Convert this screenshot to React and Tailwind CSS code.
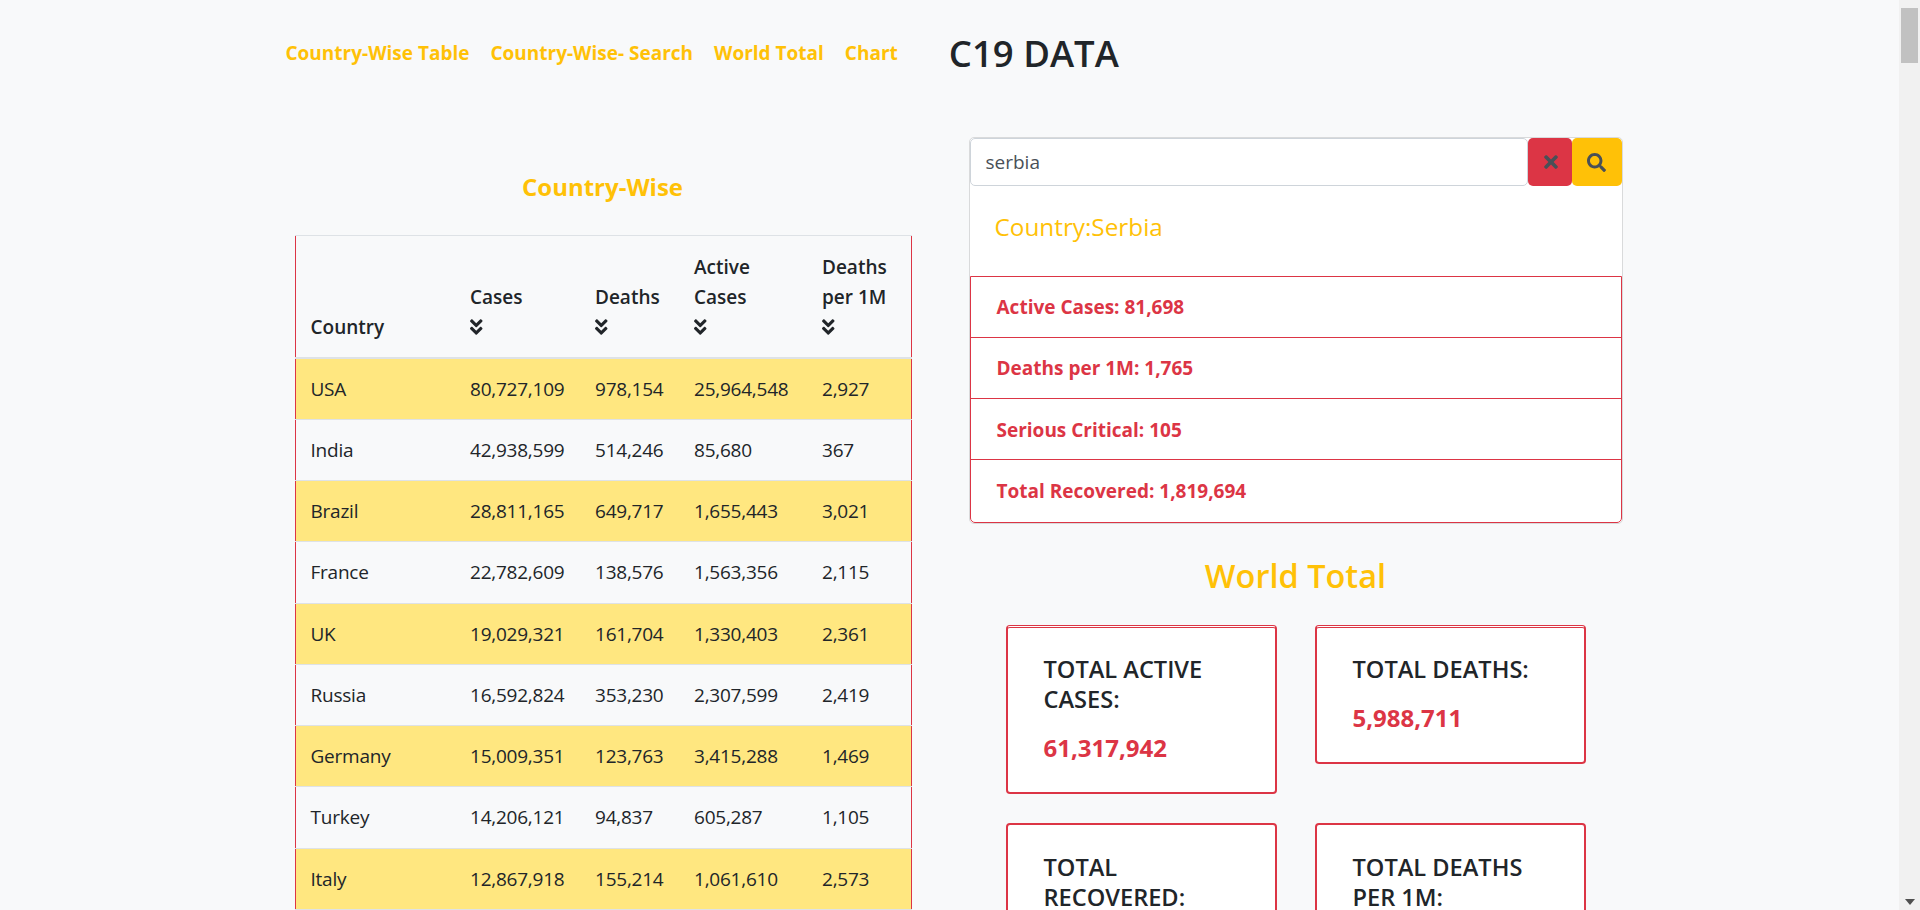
import React from "react";
import { FaAngleDoubleDown, FaTimes, FaSearch } from "react-icons/fa";

const rows = [
  ["USA", "80,727,109", "978,154", "25,964,548", "2,927"],
  ["India", "42,938,599", "514,246", "85,680", "367"],
  ["Brazil", "28,811,165", "649,717", "1,655,443", "3,021"],
  ["France", "22,782,609", "138,576", "1,563,356", "2,115"],
  ["UK", "19,029,321", "161,704", "1,330,403", "2,361"],
  ["Russia", "16,592,824", "353,230", "2,307,599", "2,419"],
  ["Germany", "15,009,351", "123,763", "3,415,288", "1,469"],
  ["Turkey", "14,206,121", "94,837", "605,287", "1,105"],
  ["Italy", "12,867,918", "155,214", "1,061,610", "2,573"],
];

const facts = [
  "Active Cases: 81,698",
  "Deaths per 1M: 1,765",
  "Serious Critical: 105",
  "Total Recovered: 1,819,694",
];

function Head({ children, icon }) {
  return (
    <th className="px-[15px] pt-[16px] pb-[15px] text-left align-bottom font-semibold leading-[30px]">
      {children}
      {icon && <FaAngleDoubleDown className="my-[5px] h-[20px] w-[12.5px]" />}
    </th>
  );
}

function Card({ title, value, doubled }) {
  return (
    <div className={`rounded-[4px] border-2 border-[#dc3545] bg-white pl-[36px] pr-[18px] pb-[29px] ${doubled ? "border-t-[3px] border-double pt-[26px] [border-left-style:solid] [border-right-style:solid] [border-bottom-style:solid]" : "pt-[27px]"}`}>
      <div className="text-[23.6px] leading-[30px] font-semibold text-[#212529]">{title}</div>
      {value && <div className="mt-[19px] text-[24px] leading-[30px] font-bold text-[#dc3545]">{value}</div>}
    </div>
  );
}

export default function App() {
  return (
    <div className="flex h-[910px] overflow-hidden bg-[#f8f9fa] font-['Open_Sans',sans-serif] text-[19px] text-[#212529]">
      <div className="min-w-0 flex-1">
        <div className="mx-auto w-[1348px]">
          <header className="flex h-[106px] items-center pl-[10px]">
            <nav className="flex gap-[21px] text-[19px] font-bold text-[#ffc107]">
              <span>Country-Wise Table</span>
              <span>Country-Wise- Search</span>
              <span>World Total</span>
              <span>Chart</span>
            </nav>
            <h1 className="ml-[51px] text-[36.5px] font-semibold">C19 DATA</h1>
          </header>
          <main className="flex items-start">
            <section className="ml-[19px] w-[616px]">
              <h2 className="mt-[64px] mb-[31px] h-[34px] text-center text-[24px] leading-[34px] font-bold text-[#ffc107]">Country-Wise</h2>
              <table className="w-[616px] table-fixed border-collapse border-x border-x-[#dc3545]">
                <colgroup>
                  <col className="w-[160px]" />
                  <col className="w-[125px]" />
                  <col className="w-[99px]" />
                  <col className="w-[128px]" />
                  <col className="w-[104px]" />
                </colgroup>
                <thead className="border-t border-b-2 border-t-[#dee2e6] border-b-[#dee2e6]">
                  <tr>
                    <Head>Country</Head>
                    <Head icon>Cases</Head>
                    <Head icon>Deaths</Head>
                    <Head icon>Active Cases</Head>
                    <Head icon>Deaths per 1M</Head>
                  </tr>
                </thead>
                <tbody>
                  {rows.map((r, i) => (
                    <tr key={r[0]} className={`h-[61.25px] border-b border-b-[#dee2e6] ${i % 2 === 0 ? "bg-[#ffe780]" : ""}`}>
                      {r.map((c) => (
                        <td key={c} className="px-[15px] align-middle leading-[30px] tracking-[-0.012em] whitespace-nowrap">{c}</td>
                      ))}
                    </tr>
                  ))}
                </tbody>
              </table>
            </section>
            <section className="ml-[58px] w-[654px] pt-[31px]">
              <div className="overflow-hidden rounded-[5px] border border-[#d9dadb] bg-white">
                <div className="flex h-[48px]">
                  <div className="flex min-w-0 flex-1 items-center rounded-[5px] border border-[#ced4da] pl-[15px] text-[#495057]">serbia</div>
                  <div className="flex w-[44px] items-center justify-center rounded-[5px] bg-[#dc3545] pl-[2px] text-[#495057]"><FaTimes className="h-[20px] w-[20px]" /></div>
                  <div className="flex w-[50px] items-center justify-center rounded-[5px] bg-[#ffc107] text-[#495057]"><FaSearch className="h-[19px] w-[19px]" /></div>
                </div>
                <div className="flex h-[89.5px] items-start pl-[25px] pt-[26px] text-[24.3px] leading-[30px] text-[#ffc107]">Country:Serbia</div>
                <ul className="rounded-b-[5px] border border-[#dc3545] font-bold text-[#dc3545]">
                  {facts.map((f) => (
                    <li key={f} className="flex h-[61.25px] items-center border-b border-b-[#dc3545] pl-[26px] pt-[1.5px] last:border-b-0">{f}</li>
                  ))}
                </ul>
              </div>
              <h2 className="mt-[29.5px] mb-[26px] h-[46px] text-center text-[32.5px] leading-[46px] font-semibold text-[#ffc107]">World Total</h2>
              <div className="mx-auto grid w-[580px] grid-cols-2 items-start gap-x-[38px] gap-y-[29px]">
                <Card doubled title="TOTAL ACTIVE CASES:" value="61,317,942" />
                <Card doubled title="TOTAL DEATHS:" value="5,988,711" />
                <Card title="TOTAL RECOVERED:" />
                <Card title="TOTAL DEATHS PER 1M:" />
              </div>
            </section>
          </main>
        </div>
      </div>
      <aside className="flex w-[21px] shrink-0 flex-col items-center bg-[#f1f1f1] px-[2px]">
        <div className="h-[8px] w-full" />
        <div className="h-[55px] w-full bg-[#c1c1c1]" />
        <div className="flex-1" />
        <svg viewBox="0 0 10 6" className="mb-[5px] h-[6px] w-[10px] fill-[#505050]"><path d="M0 0h10L5 6z" /></svg>
      </aside>
    </div>
  );
}
